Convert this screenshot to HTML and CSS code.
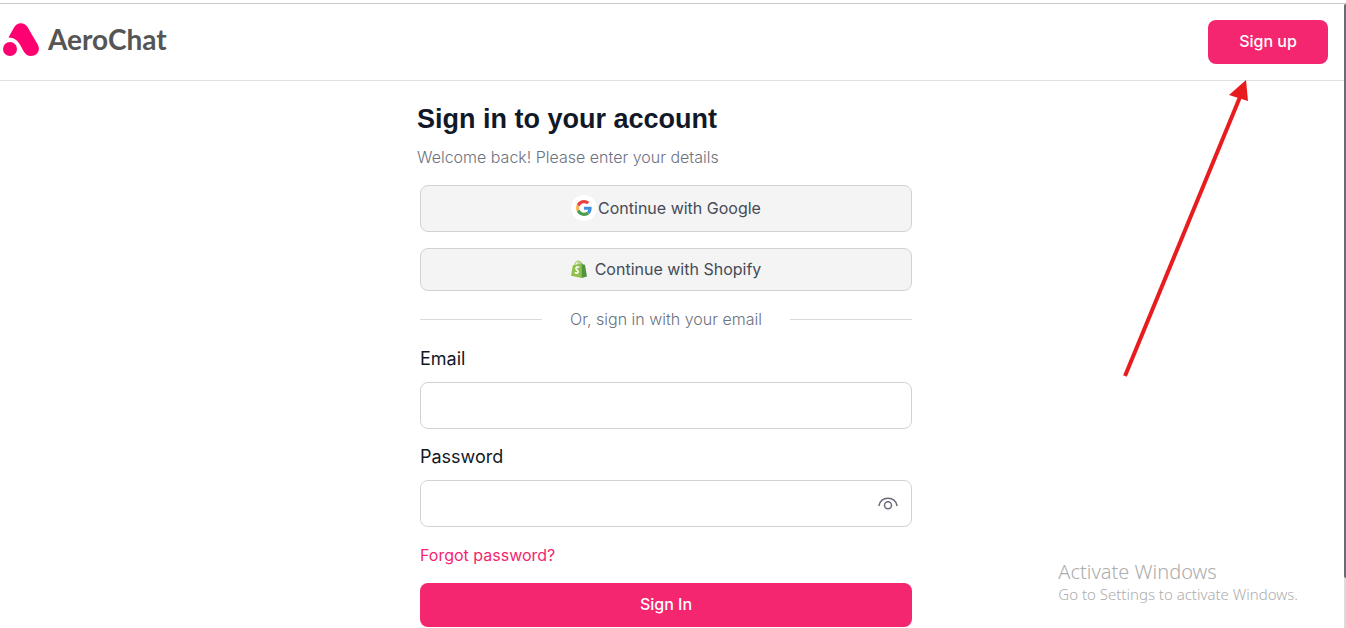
FILE: index.html
```html
<!DOCTYPE html>
<html lang="en">
<head>
  <meta charset="UTF-8">
  <meta name="viewport" content="width=device-width, initial-scale=1">
  <title>AeroChat - Sign in</title>
  <link rel="stylesheet" href="styles.css">
</head>
<body>
  <header class="header">
    <a class="brand" href="#">
      <svg class="brand-logo" viewBox="0 0 36 33" aria-hidden="true">
        <circle cx="7" cy="26" r="7"/>
        <path d="M5.500 14.500 L11 4.500 C14 -1.200 21.500 -1.200 24.500 4 L34.700 21.500 C38 27.500 34 33 28 33 C24.500 33 22.300 31.300 20.300 27.800 L17.500 22.500 C14.800 17.500 11.500 14.600 5.500 14.500 Z"/>
      </svg>
      <span class="brand-name">AeroChat</span>
    </a>
    <button class="btn btn-signup" type="button">Sign up</button>
  </header>

  <main class="main">
    <div class="intro">
      <h1 class="title">Sign in to your account</h1>
      <p class="subtitle">Welcome back! Please enter your details</p>
    </div>

    <form class="form">
      <button class="social social-google" type="button">
        <span class="google-icon">
          <svg viewBox="0 0 48 48" width="16" height="16" aria-hidden="true">
            <path fill="#f9b956" d="M10.500 28.600A14 14 0 0 1 10.500 19.400L2.600 13.200A24 24 0 0 0 2.600 34.800z"/>
            <path fill="#e94341" d="M24 9.500c3.500 0 6.700 1.200 9.200 3.600l6.900-6.900C35.900 2.400 30.500 0 24 0 14.600 0 6.500 5.400 2.600 13.200l7.900 6.200C12.400 13.700 17.700 9.500 24 9.500z"/>
            <path fill="#3f8fdc" d="M47 24.500c0-1.600-.2-3.100-.4-4.500H24v9h12.900c-.6 3-2.200 5.500-4.700 7.200l7.700 6C44.400 38 47 31.800 47 24.500z"/>
            <path fill="#4b9c4a" d="M24 48c6.500 0 11.900-2.100 15.900-5.800l-7.700-6c-2.200 1.500-4.900 2.300-8.200 2.300-6.300 0-11.600-4.200-13.500-9.900l-7.900 6.200C6.500 42.600 14.600 48 24 48z"/>
          </svg>
        </span>
        Continue with Google
      </button>

      <button class="social social-shopify" type="button">
        <svg viewBox="0 0 17 19" width="16" height="18" aria-hidden="true">
          <path d="M4 5C4.500 2.500 6 1 7.500 1S9.500 2.500 9.700 4.500M7 4.800C7.500 2 9 1 10.200 1.800 11 2.400 11.300 3.500 11.400 4.200" fill="none" stroke="#95bf47" stroke-width="1"/>
          <path fill="#8fc04a" d="M2 5.500L11.500 3.500V19L0 16.800z"/>
          <path fill="#4f9440" d="M11.300 3.500L13 4.700 14.800 5 17 17.600 11.300 19z"/>
          <path d="M8.700 7.600C7 6.900 5.400 7.500 5.300 8.900 5.200 10.700 7.800 10.600 7.600 12.600 7.400 14.200 5.500 14.200 4 13.100" fill="none" stroke="#fff" stroke-width="1.700"/>
        </svg>
        Continue with Shopify
      </button>

      <div class="divider">Or, sign in with your email</div>

      <div class="field">
        <label for="email">Email</label>
        <input class="input" id="email" type="email">
      </div>

      <div class="field">
        <label for="password">Password</label>
        <div class="password-box">
          <input class="input" id="password" type="password">
          <button class="toggle" type="button" aria-label="Show password">
            <svg viewBox="0 0 20 14" width="20" height="14" fill="none" stroke="#6b6b7b" stroke-width="1.500" aria-hidden="true">
              <path d="M1 8.500C2 4 5.600 1.200 10 1.200S18 4 19 8.500" stroke-linecap="round"/>
              <circle cx="10" cy="8.200" r="3.500"/>
            </svg>
          </button>
        </div>
      </div>

      <a class="forgot" href="#">Forgot password?</a>
      <button class="btn btn-signin" type="submit">Sign In</button>
    </form>
  </main>

  <!-- screen overlays -->
  <div class="scrollbar"><div class="scrollbar-thumb"></div></div>
  <svg class="arrow" viewBox="0 0 126 298" width="126" height="298" aria-hidden="true">
    <path d="M3 296L118 17" stroke="#e81c1f" stroke-width="4"/>
    <path d="M124 0L107 15L126 21z" fill="#e81c1f"/>
  </svg>
  <div class="watermark">
    <p class="watermark-title">Activate Windows</p>
    <p class="watermark-text">Go to Settings to activate Windows.</p>
  </div>
</body>
</html>
```

FILE: styles.css
```css
* {
  box-sizing: border-box;
}
body {
  position: relative;
  min-height: 100vh;
  margin: 0;
  padding-top: 3px;
  background: #fff;
  color: #111827;
  font-family: Inter, "Liberation Sans", sans-serif;
  font-size: 16px;
  line-height: 24px;
}
h1, p {
  margin: 0;
}
button, input {
  font: inherit;
}
button {
  cursor: pointer;
}

/* Header */
.header {
  display: flex;
  align-items: center;
  justify-content: space-between;
  padding: 16px 18px 16px 3px;
  border-top: 1px solid #cacaca;
  border-bottom: 1px solid #dfe1e6;
}
.brand {
  display: flex;
  align-items: center;
  gap: 9px;
  padding-bottom: 6px;
  color: #555;
  text-decoration: none;
}
.brand-logo {
  width: 36px;
  height: 33px;
  fill: #ff0070;
}
.brand-name {
  font-family: Lato, sans-serif;
  font-size: 28px;
  font-weight: 700;
  line-height: 32px;
}
.btn {
  height: 44px;
  padding: 0 0 2px;
  border: 0;
  border-radius: 8px;
  background: #f3266f;
  color: #fff;
  font-weight: 500;
}
.btn-signup {
  width: 120px;
}

/* Sign in form */
.main {
  max-width: 506px;
  margin: 0 auto;
  padding: 20px 14px 0 0;
}
.intro {
  margin-left: -3px;
}
.title {
  margin-bottom: 8px;
  font-family: "Liberation Sans", Arial, sans-serif;
  font-size: 27px;
  font-weight: 700;
  line-height: 36px;
}
.subtitle,
.divider {
  color: #6b7280;
  font-weight: 300;
}
.form {
  display: flex;
  flex-direction: column;
  gap: 16px;
  margin-top: 16px;
}
.social {
  display: flex;
  align-items: center;
  justify-content: center;
  padding: 0 0 2px;
  border: 1px solid #d1d2d6;
  border-radius: 8px;
  background: #f4f4f4;
  color: #454b57;
}
.social-google {
  gap: 1px;
  height: 47px;
}
.social-shopify {
  gap: 8px;
  height: 43px;
}
.google-icon {
  display: flex;
  align-items: center;
  justify-content: center;
  width: 26px;
  height: 26px;
  border-radius: 50%;
  background: #fff;
}
.divider {
  display: flex;
  align-items: center;
  gap: 28px;
}
.divider::before,
.divider::after {
  content: "";
  flex: 1;
  height: 1px;
  background: #d9dadd;
}
.field {
  display: flex;
  flex-direction: column;
  gap: 11px;
}
.field label {
  font-size: 18px;
}
.input {
  width: 100%;
  height: 47px;
  padding: 0 16px;
  border: 1px solid #d1d2d6;
  border-radius: 8px;
  background: #fff;
}
.password-box {
  display: flex;
  align-items: center;
  border: 1px solid #d1d2d6;
  border-radius: 8px;
}
.password-box .input {
  height: 45px;
  border: 0;
}
.toggle {
  display: flex;
  padding: 0 13px;
  border: 0;
  background: none;
}
.forgot {
  align-self: flex-start;
  color: #f3266f;
  text-decoration: none;
}

/* Overlays */
.scrollbar {
  position: absolute;
  top: 4px;
  right: 0;
  bottom: 0;
  width: 2px;
  background: #dcdcdc;
}
.scrollbar-thumb {
  height: 92%;
  border-radius: 2px 0 0 2px;
  background: #6b6b76;
}
.arrow {
  position: absolute;
  top: 80px;
  right: 98px;
  pointer-events: none;
}
.watermark {
  position: absolute;
  right: 48px;
  bottom: 24px;
  color: #adadad;
  font-family: "Noto Sans", "Open Sans", sans-serif;
  font-weight: 300;
  pointer-events: none;
}
.watermark-title {
  font-size: 20px;
}
.watermark-text {
  font-size: 15px;
  line-height: 20px;
}
```
